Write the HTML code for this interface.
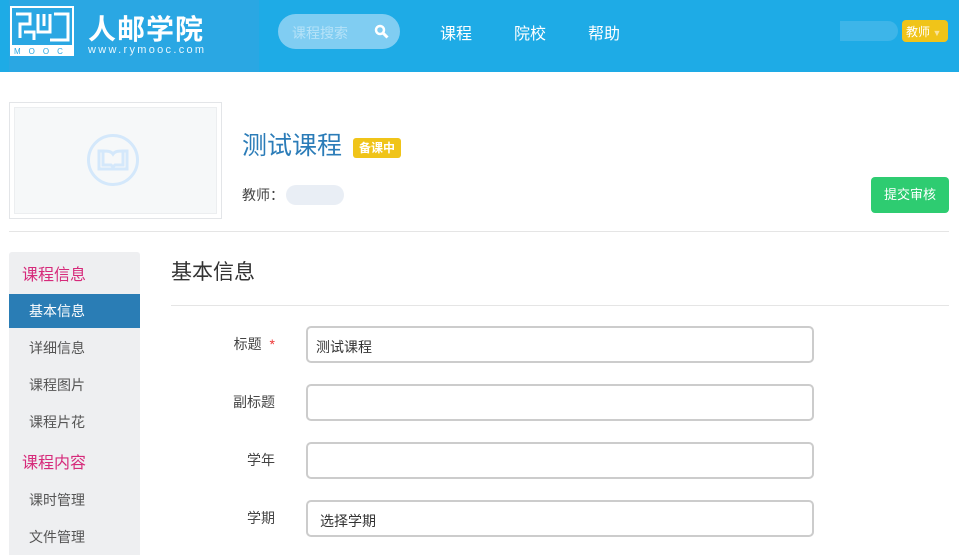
<!DOCTYPE html>
<html><head><meta charset="utf-8"><style>
*{margin:0;padding:0;box-sizing:border-box}
body{width:959px;height:555px;overflow:hidden;background:#fff;font-family:"Liberation Sans","Noto Sans CJK SC",sans-serif;position:relative}
.a{position:absolute}
.hdr{left:0;top:0;width:959px;height:72px;background:#1eabe6}
.logo{left:9px;top:0;width:250px;height:72px;background:#2aa7e3}
.nav{color:#fff;font-size:16px;top:20px}
.side{left:9px;top:252px;width:131px;height:303px;background:#eeeff1;border-radius:3px 3px 0 0}
.si{left:9px;width:131px;font-size:14px;color:#555;padding-left:20px;line-height:34px}
.sh{left:22px;font-size:16px;color:#d62a7a}
.lbl{font-size:14px;color:#444;width:100px;text-align:right}
.inp{left:306px;width:508px;height:37px;border:2px solid #ccc;border-radius:5px;font-size:14px;color:#333;padding:9px 8px}
</style></head><body>
<div class="a hdr"></div>
<div class="a logo"></div>
<svg class="a" style="left:10px;top:6px" width="64" height="50" viewBox="0 0 64 50">
<rect x="0" y="0" width="64" height="50" fill="#fff"/>
<rect x="2" y="2" width="60" height="37" fill="#2aa7e3"/>
<path d="M6 8h14v10h-10v14M14 26h10v8M28 8v18h12v-18M34 8v12M44 8h14v26h-18" stroke="#fff" stroke-width="3" fill="none"/>
<text x="4" y="48" font-size="8" fill="#2aa7e3" font-family="Liberation Sans" letter-spacing="8">MOOC</text>
</svg>
<div class="a" style="left:88px;top:8px;font-size:28px;font-weight:bold;color:#fff;letter-spacing:1px">人邮学院</div>
<div class="a" style="left:88px;top:44px;font-size:11px;color:#e8f6fd;letter-spacing:2.3px">www.rymooc.com</div>
<div class="a" style="left:278px;top:14px;width:122px;height:35px;border-radius:18px;background:#80cdf2"></div>
<div class="a" style="left:292px;top:23px;font-size:14px;color:#b5e2f8">课程搜索</div>
<svg class="a" style="left:374px;top:24px" width="15" height="15" viewBox="0 0 15 15"><circle cx="6" cy="6" r="4" stroke="#fff" stroke-width="2.5" fill="none"/><path d="M9 9l4.5 4.5" stroke="#fff" stroke-width="3"/></svg>
<div class="a nav" style="left:440px">课程</div>
<div class="a nav" style="left:514px">院校</div>
<div class="a nav" style="left:588px">帮助</div>
<div class="a" style="left:840px;top:21px;width:58px;height:20px;background:#45b8ea;border-radius:0 10px 10px 0;opacity:.8"></div>
<div class="a" style="left:902px;top:20px;width:46px;height:22px;background:#f0c419;border-radius:4px;color:#fff;font-size:12px;padding:3px 4px">教师<span style="font-size:9px;color:#f9e39a"> ▼</span></div>

<div class="a" style="left:9px;top:102px;width:213px;height:117px;border:1px solid #e3e5e8;padding:4px"><div style="width:100%;height:100%;background:#f6f8f9;border:1px solid #eceef0"></div></div>
<svg class="a" style="left:86px;top:133px" width="54" height="54" viewBox="0 0 54 54"><circle cx="27" cy="27" r="24.5" stroke="#d4e8fb" stroke-width="3" fill="none"/><path d="M13 18v18h28v-18h-4v14h-8l-2 2l-2-2h-8v-14z M17 18c4 0 8 0 10 3c2-3 6-3 10-3" stroke="#d4e8fb" stroke-width="3" fill="none"/></svg>
<div class="a" style="left:242px;top:126px;font-size:25px;color:#2b7cb8">测试课程</div>
<div class="a" style="left:353px;top:138px;width:48px;height:20px;background:#f0c419;border-radius:3px;color:#fff;font-size:12px;font-weight:bold;text-align:center;line-height:20px">备课中</div>
<div class="a" style="left:242px;top:185px;font-size:14px;color:#444">教师：</div>
<div class="a" style="left:286px;top:185px;width:58px;height:20px;background:#e9eef5;border-radius:10px"></div>
<div class="a" style="left:871px;top:177px;width:78px;height:36px;background:#2ecc71;border-radius:4px;color:#fff;font-size:13px;text-align:center;line-height:36px">提交审核</div>
<div class="a" style="left:9px;top:231px;width:940px;height:1px;background:#e5e5e5"></div>

<div class="a side"></div>
<div class="a sh" style="top:261px">课程信息</div>
<div class="a si" style="top:294px;background:#2a7db5;color:#fff">基本信息</div>
<div class="a si" style="top:331px">详细信息</div>
<div class="a si" style="top:368px">课程图片</div>
<div class="a si" style="top:405px">课程片花</div>
<div class="a sh" style="top:449px">课程内容</div>
<div class="a si" style="top:483px">课时管理</div>
<div class="a si" style="top:520px">文件管理</div>

<div class="a" style="left:171px;top:256px;font-size:21px;color:#333">基本信息</div>
<div class="a" style="left:171px;top:305px;width:778px;height:1px;background:#e5e5e5"></div>
<div class="a lbl" style="left:175px;top:334px">标题 <span style="color:#e33;margin-left:4px">*</span></div>
<div class="a inp" style="top:326px">测试课程</div>
<div class="a lbl" style="left:175px;top:392px">副标题</div>
<div class="a inp" style="top:384px"></div>
<div class="a lbl" style="left:175px;top:450px">学年</div>
<div class="a inp" style="top:442px"></div>
<div class="a lbl" style="left:175px;top:508px">学期</div>
<div class="a inp" style="top:500px;padding-left:12px">选择学期</div>
</body></html>
